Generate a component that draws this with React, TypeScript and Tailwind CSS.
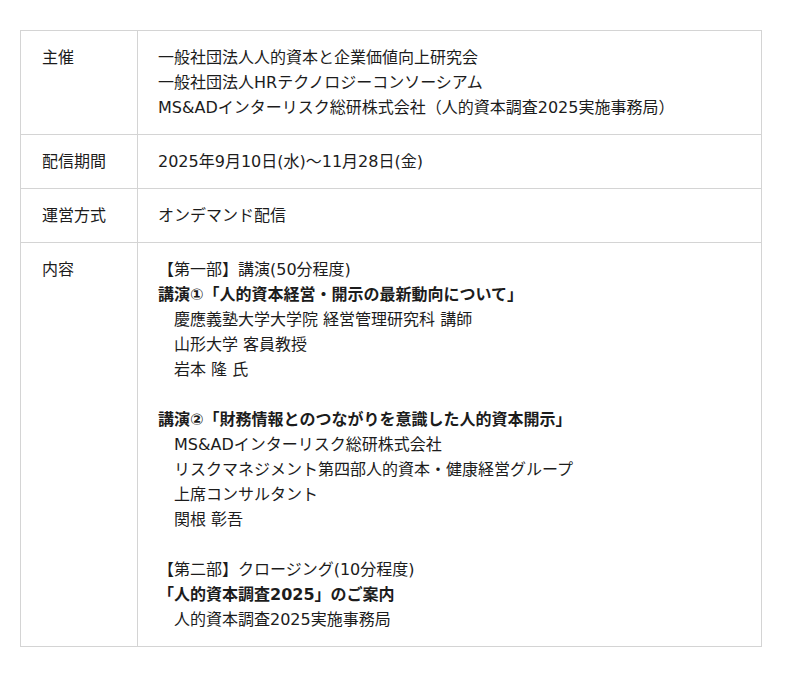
import React from 'react'

type Row = {
  label: string
  lines: { text: string, bold?: boolean }[]
}

const rows: Row[] = [
  {
    label: '主催',
    lines: [
      { text: '一般社団法人人的資本と企業価値向上研究会' },
      { text: '一般社団法人HRテクノロジーコンソーシアム' },
      { text: 'MS&ADインターリスク総研株式会社（人的資本調査2025実施事務局）' },
    ],
  },
  {
    label: '配信期間',
    lines: [{ text: '2025年9月10日(水)〜11月28日(金)' }],
  },
  {
    label: '運営方式',
    lines: [{ text: 'オンデマンド配信' }],
  },
  {
    label: '内容',
    lines: [
      { text: '【第一部】講演(50分程度)' },
      { text: '講演①「人的資本経営・開示の最新動向について」', bold: true },
      { text: '　慶應義塾大学大学院 経営管理研究科 講師' },
      { text: '　山形大学 客員教授' },
      { text: '　岩本 隆 氏' },
      { text: '' },
      { text: '講演②「財務情報とのつながりを意識した人的資本開示」', bold: true },
      { text: '　MS&ADインターリスク総研株式会社' },
      { text: '　リスクマネジメント第四部人的資本・健康経営グループ' },
      { text: '　上席コンサルタント' },
      { text: '　関根 彰吾' },
      { text: '' },
      { text: '【第二部】クロージング(10分程度)' },
      { text: '「人的資本調査2025」のご案内', bold: true },
      { text: '　人的資本調査2025実施事務局' },
    ],
  },
]

export default function App() {
  return (
    <div className="bg-white min-h-[677px] pt-[30px] pl-[20px] text-[16px] leading-[25px] text-[#1c1c1c]" style={{ fontFamily: '"DejaVu Sans", "Noto Sans CJK JP", sans-serif' }}>
      <table className="w-[742px] border-collapse">
        <tbody>
          {rows.map(({ label, lines }, index) => {
            return <tr key={index}>
              <td className="w-[117px] border border-[#d4d4d4] align-top py-[14px] px-[21px] whitespace-pre">{label}</td>
              <td className="border border-[#d4d4d4] align-top py-[14px] px-[20px]">
                {lines.map((line, i) => {
                  return <div key={i} className={`whitespace-pre h-[25px] ${line.bold ? 'font-bold' : ''}`}>{line.text}</div>
                })}
              </td>
            </tr>
          })}
        </tbody>
      </table>
    </div>
  )
}
